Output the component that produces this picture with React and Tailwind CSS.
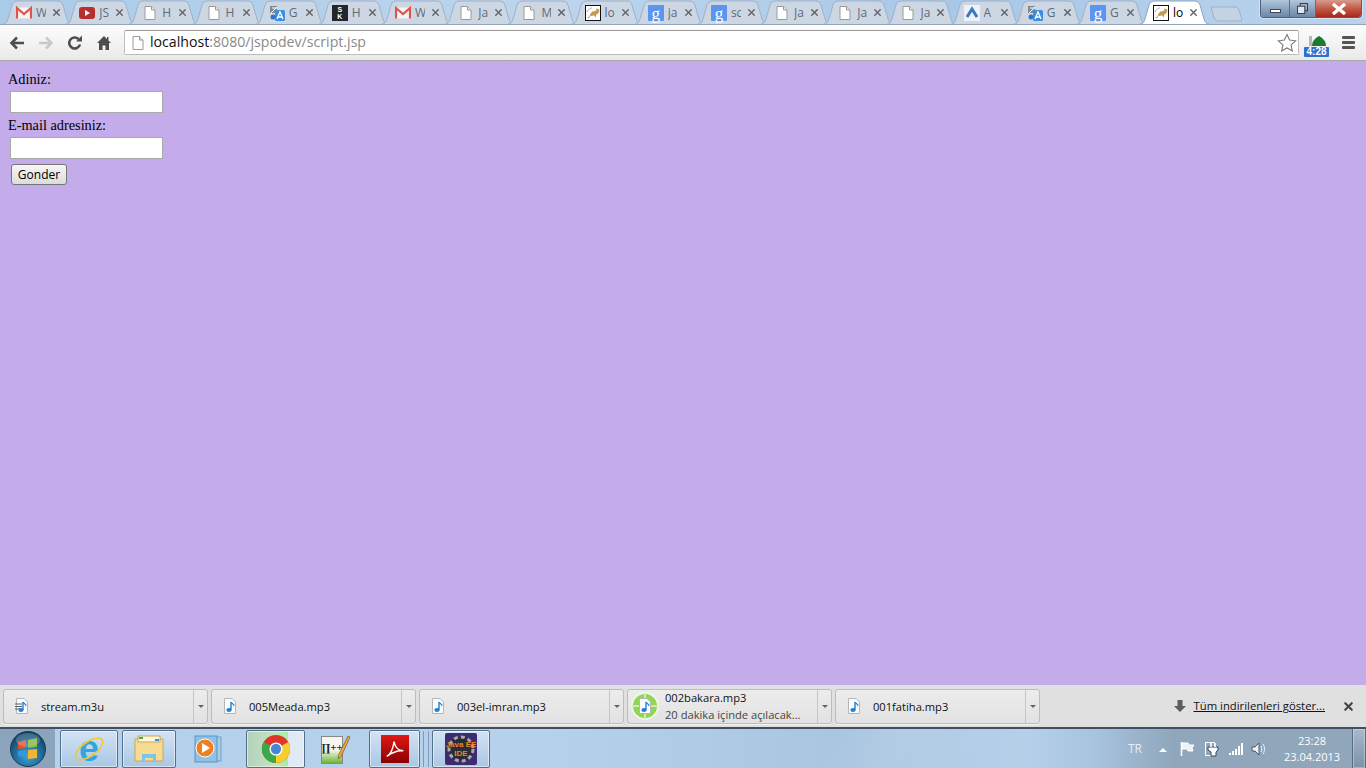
import { X } from "lucide-react";

function PageIcon({ className = "h-4 w-4" }) {
    return (
        <svg viewBox="0 0 16 16" className={className}>
            <path d="M3 1.500h6.500L13 5v9.500H3z" fill="#fff" stroke="#9a9a9a" />
            <path d="M9.500 1.500V5H13" fill="#e8e8e8" stroke="#9a9a9a" />
        </svg>
    );
}

function GmailIcon() {
    return (
        <svg viewBox="0 0 16 16" className="h-4 w-4">
            <rect x="0.500" y="2.500" width="15" height="11" fill="#f4f4f4" />
            <path d="M1 13.500V3l7 6 7-6v10.500" fill="none" stroke="#e0524a" strokeWidth="2.200" />
        </svg>
    );
}

function YoutubeIcon() {
    return (
        <svg viewBox="0 0 16 16" className="h-4 w-4">
            <rect x="0" y="2" width="16" height="12" rx="3" fill="#b82f2f" />
            <path d="M6 5l5 3-5 3z" fill="#fff" />
        </svg>
    );
}

function TranslateIcon() {
    return (
        <svg viewBox="0 0 16 16" className="h-4 w-4">
            <path d="M1 1h7v7H1z" fill="#7f8a94" />
            <path d="M2 8l6-6M3 3h5" stroke="#fff" strokeWidth="1" />
            <rect x="6" y="5" width="10" height="11" rx="1.500" fill="#3b8fe0" />
            <path d="M8 14l3-7 3 7M9.200 12h3.600" fill="none" stroke="#fff" strokeWidth="1.300" />
            <circle cx="4" cy="12" r="2.500" fill="#2f74c8" />
        </svg>
    );
}

function TomcatIcon() {
    return (
        <svg viewBox="0 0 16 16" className="h-4 w-4">
            <rect x="0.500" y="0.500" width="15" height="15" fill="#fff" stroke="#111" />
            <path d="M1.500 12.500l3-1 1-3 2-2 3-.5 1.500-3 .8 1.500 1.700-.5-.5 3.500-3 2.500v2.500l-2-2-3.500.5-1.500 2z" fill="#c49a4e" />
            <path d="M2 7c1.500-3 3-4 5-4" fill="none" stroke="#99a" strokeWidth="0.800" />
        </svg>
    );
}

function Favicon({ type }) {
    if (type === "gmail") return <GmailIcon />;
    if (type === "yt") return <YoutubeIcon />;
    if (type === "tr") return <TranslateIcon />;
    if (type === "cat") return <TomcatIcon />;
    if (type === "sk") {
        return (
            <span className="flex h-4 w-4 flex-col items-center justify-center bg-[#20262c] font-['Liberation_Sans',sans-serif] text-[7px] font-bold leading-[7px] text-white">
                <span>S</span>
                <span>K</span>
            </span>
        );
    }
    if (type === "g") {
        return (
            <span className="flex h-4 w-4 items-center justify-center rounded-[1px] bg-[#5b95ee] font-['Liberation_Serif',serif] text-[17px] leading-[13px] text-white">
                g
            </span>
        );
    }
    if (type === "ad") {
        return (
            <svg viewBox="0 0 16 16" className="h-4 w-4">
                <rect width="16" height="16" fill="#eef2f8" />
                <path d="M3 12l5-8 5 8" fill="none" stroke="#3a78c2" strokeWidth="3" />
            </svg>
        );
    }
    return <PageIcon />;
}

const tabs = [
    ["gmail", "W"],
    ["yt", "JS"],
    ["doc", "H"],
    ["doc", "H"],
    ["tr", "G"],
    ["sk", "H"],
    ["gmail", "W"],
    ["doc", "Ja"],
    ["doc", "M"],
    ["cat", "lo"],
    ["g", "ja"],
    ["g", "sc"],
    ["doc", "Ja"],
    ["doc", "Ja"],
    ["doc", "Ja"],
    ["ad", "A"],
    ["tr", "G"],
    ["g", "G"],
    ["cat", "lo", true],
];

function Tab({ icon, title, active }) {
    return (
        <div className={`relative mr-[-5.830px] h-[24px] w-[69px] shrink-0 ${active ? "z-10" : ""}`}>
            <svg viewBox="0 0 69 24" className="absolute inset-0 h-full w-full">
                <path
                    d="M0 24C3 24 4 22 5 19L9 5C10 2 12 1 15 1H54C57 1 59 2 60 5L64 19C65 22 66 24 69 24"
                    fill={active ? "#ffffff" : "#cdd7e4"}
                    stroke={active ? "#8fa5bd" : "#a0b1c5"}
                />
            </svg>
            <div className="absolute left-[13px] top-[5px]">
                <Favicon type={icon} />
            </div>
            <span className={`absolute left-[33px] top-[4px] w-[10px] overflow-hidden whitespace-nowrap text-[12px] leading-[17px] ${active ? "text-black" : "text-[#5f6b78]"}`}>
                {title}
            </span>
            <X className="absolute left-[48px] top-[7px] h-[11px] w-[11px] text-[#5f6368]" strokeWidth={3} />
        </div>
    );
}

function WindowControls() {
    return (
        <div className="absolute right-[4px] top-0 flex h-[18px] w-[102px] overflow-hidden rounded-b-[4px] border border-t-0 border-[#4c6079] shadow-[0_0_0_1px_rgba(255,255,255,0.4)]">
            <div className="flex w-[29px] items-center justify-center border-r border-[#5c6f86] bg-[linear-gradient(#b3c6dc,#8da6c0_50%,#6c88a8)]">
                <div className="mt-1 h-[4px] w-[11px] border border-[#445] bg-white" />
            </div>
            <div className="flex w-[26px] items-center justify-center border-r border-[#5c6f86] bg-[linear-gradient(#b3c6dc,#8da6c0_50%,#6c88a8)]">
                <svg viewBox="0 0 12 12" className="h-[11px] w-[11px]">
                    <rect x="3.500" y="0.500" width="8" height="8" fill="none" stroke="#334" />
                    <rect x="0.500" y="3.500" width="8" height="8" fill="#dfe7f0" stroke="#334" />
                </svg>
            </div>
            <div className="flex flex-1 items-center justify-center bg-[linear-gradient(#d89a8e,#c25a48_50%,#a9281a)]">
                <svg viewBox="0 0 18 12" className="h-[12px] w-[18px]">
                    <path d="M3 1l12 10M15 1L3 11" stroke="#fff" strokeWidth="3.400" />
                </svg>
            </div>
        </div>
    );
}

function Toolbar() {
    return (
        <div className="flex h-[36px] items-center border-b border-[#a8a8a8] bg-[linear-gradient(#fdfdfd,#e9e9e9)]">
            <svg viewBox="0 0 16 16" className="ml-[9px] h-4 w-4">
                <path d="M15 8H3M8 2.500L2.500 8 8 13.500" fill="none" stroke="#4e4e4e" strokeWidth="2.600" />
            </svg>
            <svg viewBox="0 0 16 16" className="ml-[13px] h-4 w-4">
                <path d="M1 8h12M8 2.500L13.500 8 8 13.500" fill="none" stroke="#c9c9c9" strokeWidth="2.600" />
            </svg>
            <svg viewBox="0 0 16 16" className="ml-[13px] h-4 w-4">
                <path d="M13 9.500A5.500 5.500 0 1 1 11.500 4" fill="none" stroke="#4e4e4e" strokeWidth="2.600" />
                <path d="M9 6.500h6v-6z" fill="#4e4e4e" />
            </svg>
            <svg viewBox="0 0 16 16" className="ml-[13px] h-4 w-4">
                <path d="M8 1L1 8h2v7h3.500v-4.500h3V15H13V8h2l-2.500-2.500V2H11v2z" fill="#4e4e4e" />
            </svg>
            <div className="ml-[12px] flex h-[25px] w-[1175px] items-center rounded-[2px] border border-[#bcbcbc] border-t-[#9a9a9a] bg-white">
                <PageIcon className="ml-[5px] h-4 w-4" />
                <span className="ml-[4px] font-['Open_Sans',sans-serif] text-[14.150px] leading-none text-[#111]">
                    localhost<span className="text-[#8a8a8a]">:8080/jspodev/script.jsp</span>
                </span>
                <svg viewBox="0 0 20 20" className="ml-auto mr-[1px] h-[20px] w-[20px]">
                    <path d="M10 1.500l2.600 5.600 6 .7-4.500 4.100 1.200 6L10 15l-5.300 2.900 1.200-6-4.500-4.100 6-.7z" fill="#fff" stroke="#777" strokeWidth="1.100" />
                </svg>
            </div>
            <div className="relative ml-[5px] h-[26px] w-[27px]">
                <svg viewBox="0 0 27 26" className="absolute inset-0 h-full w-full">
                    <path d="M8 16c0-6 5-9 7-10 2 1 7 4 7 10z" fill="#1c7a33" />
                    <rect x="5" y="6" width="3" height="10" fill="#b9b9b0" />
                </svg>
                <span className="absolute bottom-[-1px] left-0 flex h-[10px] w-[25px] items-center justify-center rounded-[1px] bg-[#2f6fd0] font-['Liberation_Sans',sans-serif] text-[10px] font-bold leading-none text-white">
                    4:28
                </span>
            </div>
            <div className="ml-[11px] flex w-[13px] flex-col gap-[2px]">
                <div className="h-[3px] rounded-[1px] bg-[#555]" />
                <div className="h-[3px] rounded-[1px] bg-[#555]" />
                <div className="h-[3px] rounded-[1px] bg-[#555]" />
            </div>
        </div>
    );
}

function MusicFile({ list }) {
    return (
        <svg viewBox="0 0 14 16" className="h-[16px] w-[14px]">
            <path d="M1.500 .5h7.500l3.500 3.500v11.500h-11z" fill="#fbfbfb" stroke="#b5b5b5" />
            {list && <path d="M0 6h7M0 8.500h7M0 11h7" stroke="#56606b" strokeWidth="1.200" />}
            <path d="M8 4v8" stroke="#1f80d8" strokeWidth="1.400" />
            <path d="M8 4c1 2 3 2 3 4" fill="none" stroke="#1f80d8" strokeWidth="1.200" />
            <ellipse cx="6" cy="12" rx="2.600" ry="2" fill="#1f80d8" />
        </svg>
    );
}

function DownloadItem({ name, icon, sub }) {
    return (
        <div className="flex h-[35px] w-[205px] shrink-0 rounded-[3px] border border-[#bdbdbd] bg-[linear-gradient(#ececec,#e2e2e2)] shadow-[0_1px_0_#f4f4f4]">
            <div className="flex min-w-0 flex-1 items-center">
                {icon === "progress" ? (
                    <div className="relative ml-[3px] mr-[6px] flex h-[28px] w-[28px] shrink-0 items-center justify-center rounded-full border-2 border-[#eef5e8] bg-[#8fd652]">
                        <div className="absolute h-[26px] w-[2px] bg-[#cfe9ba]" />
                        <div className="absolute h-[2px] w-[26px] bg-[#cfe9ba]" />
                        <div className="relative">
                            <MusicFile />
                        </div>
                    </div>
                ) : (
                    <div className="ml-[11px] mr-[12px] w-[14px]">
                        <MusicFile list={icon === "list"} />
                    </div>
                )}
                <div className="font-['Open_Sans',sans-serif] text-[11.150px] text-[#111]">
                    <div className="leading-[17px]">{name}</div>
                    {sub && <div className="whitespace-nowrap leading-[17px] text-[#444]">{sub}</div>}
                </div>
            </div>
            <div className="flex w-[14px] items-center justify-center border-l border-[#c6c6c6]">
                <div className="h-0 w-0 border-x-[3px] border-t-[3px] border-x-transparent border-t-[#666]" />
            </div>
        </div>
    );
}

function DownloadShelf() {
    return (
        <div className="flex h-[42px] items-center gap-[3px] bg-[#e0e0e0] pl-[3px]">
            <DownloadItem name="stream.m3u" icon="list" />
            <DownloadItem name="005Meada.mp3" />
            <DownloadItem name="003el-imran.mp3" />
            <DownloadItem name="002bakara.mp3" icon="progress" sub="20 dakika içinde açılacak..." />
            <DownloadItem name="001fatiha.mp3" />
            <svg viewBox="0 0 12 14" className="ml-auto h-[14px] w-[12px]">
                <path d="M3.500 1h5v6H12L6 13 0 7h3.500z" fill="#5d5d5d" />
            </svg>
            <span className="ml-[5px] font-['Open_Sans',sans-serif] text-[11.300px] leading-none text-[#111] underline">
                Tüm indirilenleri göster...
            </span>
            <X className="ml-[14px] mr-[11px] h-[13px] w-[13px] text-[#444]" strokeWidth={4} />
        </div>
    );
}

function TaskTile({ w, active, framed = true, ml = 0, children }) {
    return (
        <div
            className={`flex h-[38px] shrink-0 items-center justify-center rounded-[2px] ${
                framed ? "border border-[#52708c] shadow-[inset_0_0_0_1px_rgba(255,255,255,0.5)]" : ""
            } ${active ? "bg-[linear-gradient(90deg,#b4d0bc,#c3e6bf_50%,#a3efa0_72%,#dfeaf4_72%)]" : framed ? "bg-[linear-gradient(#d3e3f3,#a9c7e4)]" : ""}`}
            style={{ width: w, marginLeft: ml }}
        >
            {children}
        </div>
    );
}

function Taskbar() {
    return (
        <div className="flex h-[41px] items-center border-t-2 border-[#3f4f5f] bg-[linear-gradient(115deg,rgba(255,255,255,0)_60%,rgba(255,255,255,0.08)_65%,rgba(255,255,255,0)_72%),linear-gradient(90deg,#b5d0ea_0%,#b6d1eb_40%,#a9c5e0_62%,#b6d0ea_75%,#a8c4df_80%,#8fa6bb_86%,#8fa6bb_100%)]">
            {/* start orb */}
            <div className="flex h-full w-[55px] shrink-0 items-center justify-center bg-[#8ba3bb]">
                <svg viewBox="0 0 36 36" className="h-[36px] w-[36px]">
                    <defs>
                        <radialGradient id="orb" cx="50%" cy="70%" r="70%">
                            <stop offset="0%" stopColor="#3fa4dc" />
                            <stop offset="100%" stopColor="#0a3b5e" />
                        </radialGradient>
                    </defs>
                    <circle cx="18" cy="18" r="17.500" fill="url(#orb)" stroke="#1d3c52" />
                    <path d="M8 11l8-2v8l-8 1z" fill="#e2522a" />
                    <path d="M18 9l9-2v9l-9 1z" fill="#7db93d" />
                    <path d="M8 20l8-1v8l-8-2z" fill="#2f98e0" />
                    <path d="M18 19l9-1v9l-9 1z" fill="#f2b62e" />
                    <ellipse cx="18" cy="9" rx="12" ry="7" fill="#fff" opacity="0.2" />
                </svg>
            </div>
            <TaskTile w={58} ml={5}>
                <div className="relative flex h-[32px] w-[32px] items-center justify-center">
                    <span className="font-['Liberation_Sans',sans-serif] text-[36px] font-bold leading-[30px] text-[#2ea6e6]">e</span>
                    <svg viewBox="0 0 32 32" className="absolute inset-0">
                        <ellipse cx="16" cy="16" rx="16" ry="7" transform="rotate(-35 16 16)" fill="none" stroke="#f2c830" strokeWidth="1.600" />
                    </svg>
                </div>
            </TaskTile>
            <TaskTile w={54} ml={4}>
                <svg viewBox="0 0 32 32" className="h-[32px] w-[32px]">
                    <path d="M2 6h28v22H2z" fill="#f6dc92" stroke="#c8a858" />
                    <rect x="5" y="3" width="22" height="6" fill="#fdf6dc" stroke="#c8a858" />
                    <rect x="6" y="4" width="4" height="2" fill="#3fae45" />
                    <rect x="22" y="6" width="4" height="2" fill="#3a8fe0" />
                    <path d="M9 28v-7h14v7h-3v-3h-8v3z" fill="#7cc4ee" />
                </svg>
            </TaskTile>
            <TaskTile w={62} framed={false}>
                <svg viewBox="0 0 32 32" className="h-[32px] w-[32px]">
                    <rect x="8" y="4" width="22" height="24" fill="#a8cde8" stroke="#6f9fc6" />
                    <rect x="4" y="3" width="22" height="26" fill="#8fc1e6" stroke="#5b93bf" />
                    <circle cx="14" cy="15" r="9" fill="#f0801e" stroke="#fff" />
                    <path d="M11 10l8 5-8 5z" fill="#fff" />
                </svg>
            </TaskTile>
            <TaskTile w={59} ml={8} active>
                <svg viewBox="0 0 32 32" className="h-[30px] w-[30px]">
                    <circle cx="16" cy="16" r="15" fill="#e0352b" />
                    <path d="M16 16L29 8.500A15 15 0 0 1 16 31z" fill="#f8cd2e" />
                    <path d="M16 16L16 31A15 15 0 0 1 3 8.500z" fill="#3ba84a" />
                    <circle cx="16" cy="16" r="7" fill="#fff" />
                    <circle cx="16" cy="16" r="5.500" fill="#4a86d8" />
                </svg>
            </TaskTile>
            <TaskTile w={60} framed={false}>
                <div className="relative h-[32px] w-[32px]">
                    <div className="absolute left-[2px] top-[3px] flex h-[28px] w-[22px] justify-center border border-[#888] bg-[linear-gradient(#f6f6ee_50%,#6fb536)] font-['Liberation_Serif',serif] text-[11px] font-bold leading-[20px] text-[#222]">
                        ∏++
                    </div>
                    <svg viewBox="0 0 32 32" className="absolute inset-0">
                        <path d="M29 3l2 1-9 20-3 2 .5-4z" fill="#e8a83c" stroke="#6a4a1a" strokeWidth="0.600" />
                    </svg>
                </div>
            </TaskTile>
            <TaskTile w={51} ml={4}>
                <div className="flex h-[28px] w-[28px] items-center justify-center bg-[linear-gradient(#e01818,#8c0000)]">
                    <svg viewBox="0 0 24 24" className="h-[22px] w-[22px]">
                        <path d="M3 20c4-2 7-9 8-16 1 6 5 10 10 10-6-1-11 1-18 6z" fill="none" stroke="#fff" strokeWidth="1.600" />
                    </svg>
                </div>
            </TaskTile>
            <div className="ml-[3px] h-[36px] w-[1px] bg-[#7f9ab4]" />
            <div className="ml-[4px] h-[36px] w-[1px] bg-[#7f9ab4]" />
            <TaskTile w={58} ml={3}>
                <div className="relative flex h-[32px] w-[32px] items-center justify-center rounded-[2px] bg-[#3d2a72] text-center font-['Liberation_Sans',sans-serif] text-[8px] font-bold leading-[9px] text-[#e8862a]">
                    <svg viewBox="0 0 32 32" className="absolute inset-0">
                        <circle cx="16" cy="16" r="12" fill="#2b2b33" stroke="#a8a8a8" strokeWidth="3" strokeDasharray="4 3" />
                    </svg>
                    <span className="relative whitespace-nowrap">
                        Java EE
                        <br />
                        IDE
                    </span>
                </div>
            </TaskTile>

            {/* tray */}
            <span className="ml-auto font-['Open_Sans',sans-serif] text-[12px] leading-none text-[#e4ecf4]">TR</span>
            <div className="ml-[17px] mt-[2px] h-0 w-0 border-x-[4px] border-b-[4px] border-x-transparent border-b-white" />
            <svg viewBox="0 0 16 16" className="ml-[12px] h-4 w-4">
                <path d="M2.500 1v14" stroke="#fff" strokeWidth="1.600" />
                <path d="M3 2h6l1 2h5l-2 3 1 3H9L8 8H3z" fill="#eef2f6" stroke="#fff" />
            </svg>
            <svg viewBox="0 0 16 16" className="ml-[9px] h-4 w-4">
                <path d="M1.500 1.500h9v13h-9z" fill="#8fa6bb" stroke="#fff" />
                <path d="M4 6h10v3l-2 2v4H7v-4L4 9z" fill="#fff" stroke="#3a4754" />
                <path d="M7 2v4M11 2v4" stroke="#fff" strokeWidth="1.600" />
            </svg>
            <svg viewBox="0 0 16 16" className="ml-[8px] h-4 w-4">
                <path d="M1 12h2v2H1zM4 10h2v4H4zM7 8h2v6H7zM10 5h2v9h-2zM13 2h2v12h-2z" fill="#fff" />
            </svg>
            <svg viewBox="0 0 16 16" className="ml-[6px] h-4 w-4">
                <path d="M2 6h3l4-4v12l-4-4H2z" fill="#eef2f6" stroke="#4a5a6a" />
                <path d="M11 5c1 2 1 4 0 6M13 3c2 3 2 7 0 10" fill="none" stroke="#eef2f6" />
            </svg>
            <div className="ml-[17px] w-[58px] text-center font-['Open_Sans',sans-serif] text-[11px] leading-[16px] text-white">
                <div>23:28</div>
                <div className="whitespace-nowrap">23.04.2013</div>
            </div>
            <div className="ml-[11px] h-full w-[14px] border-x border-[#5a6d80] bg-[linear-gradient(#a8b9ca,#7c92a8)] shadow-[inset_0_0_0_1px_rgba(255,255,255,0.3)]" />
        </div>
    );
}

export default function App() {
    return (
        <div className="flex h-screen w-full flex-col overflow-hidden bg-[#c4abe9] font-['Liberation_Serif',serif]">
            {/* tab strip */}
            <div className="relative h-[25px] shrink-0 border-b border-[#94a5b8] bg-[linear-gradient(100deg,#a9cbe9,#bcd5ee_40%,#a8c8e8_70%,#bad3ec)] font-['Open_Sans',sans-serif]">
                <div className="flex pl-[3px]">
                    {tabs.map((t, i) => (
                        <Tab key={i} icon={t[0]} title={t[1]} active={t[2]} />
                    ))}
                    <svg viewBox="0 0 34 16" className="ml-[7px] mt-[6px] h-[16px] w-[34px]">
                        <path d="M1 1h24c2 0 3 1 4 3l3 10c0 1-1 1-2 1H8c-2 0-3-1-4-3z" fill="#c4d3e4" stroke="#9db1c7" />
                    </svg>
                </div>
                <WindowControls />
            </div>
            <Toolbar />

            {/* page */}
            <main className="flex flex-1 flex-col items-start px-2 pt-[10px] text-[14.300px] leading-[17px] text-black">
                <label>Adiniz:</label>
                <input className="ml-[2px] mt-[3px] h-[22px] w-[153px] border border-[#a9a9a9] bg-white" />
                <label className="mt-[4px]">E-mail adresiniz:</label>
                <input className="ml-[2px] mt-[3px] h-[22px] w-[153px] border border-[#a9a9a9] bg-white" />
                <button className="ml-[3px] mt-[5px] h-[21px] w-[56px] rounded-[3px] border border-[#777] bg-[linear-gradient(#f6f6f6,#dcdcdc)] font-['Open_Sans',sans-serif] text-[12px] leading-none text-black">
                    Gonder
                </button>
            </main>

            <DownloadShelf />
            <Taskbar />
        </div>
    );
}
